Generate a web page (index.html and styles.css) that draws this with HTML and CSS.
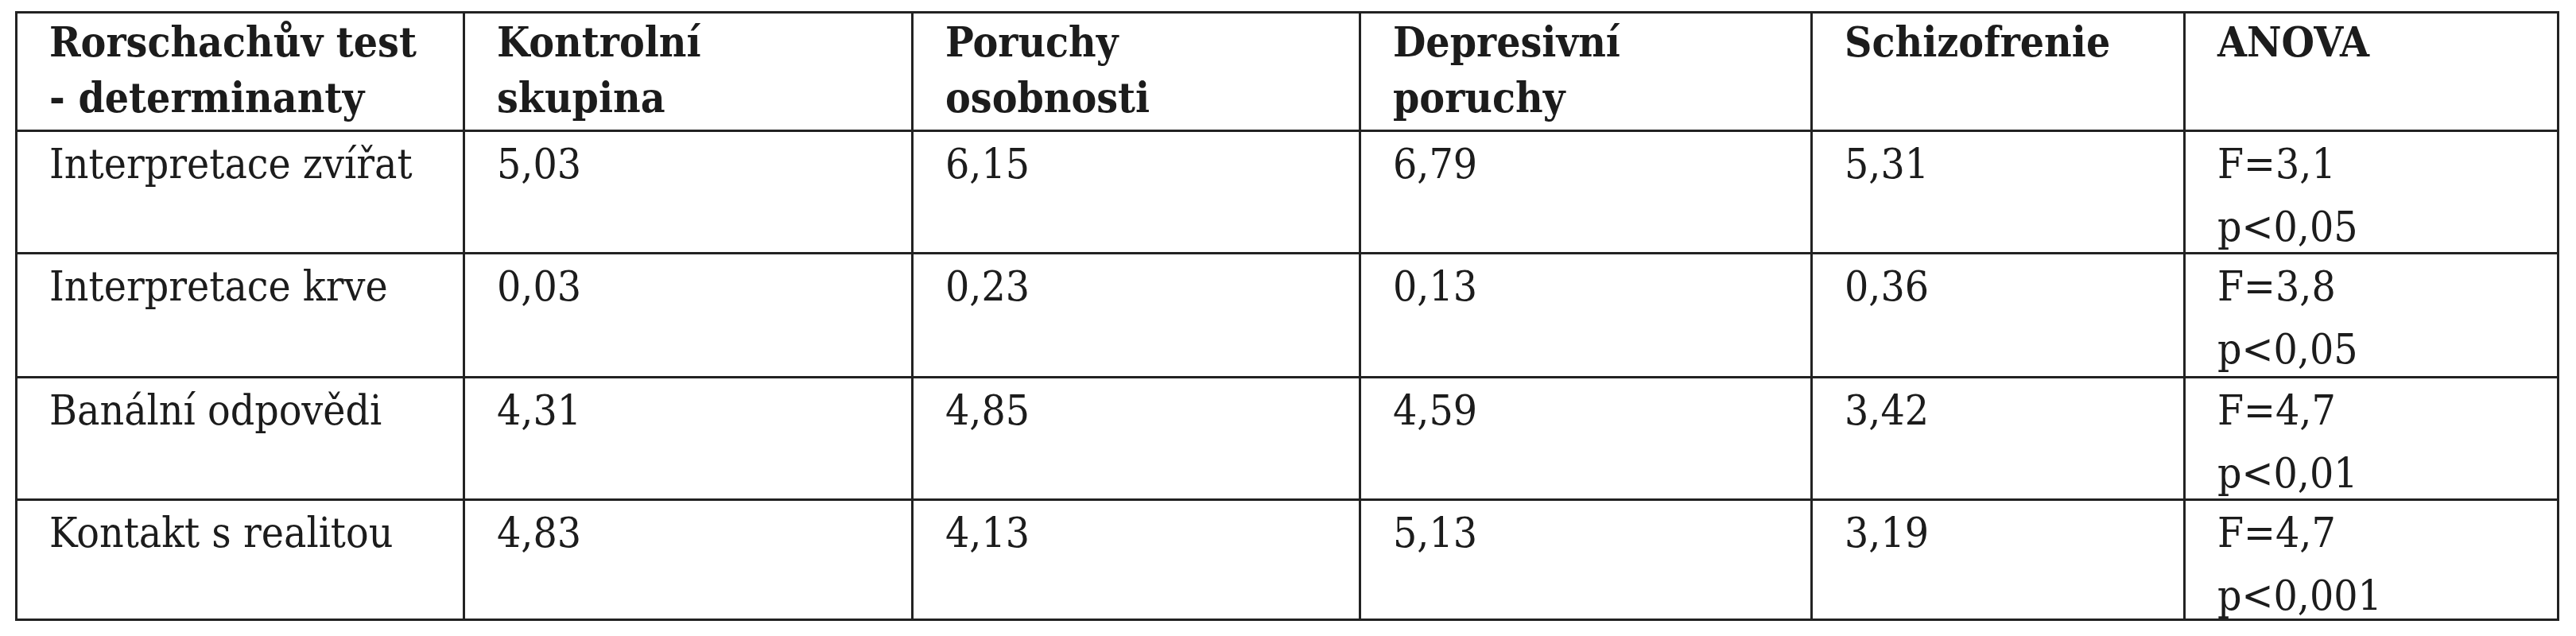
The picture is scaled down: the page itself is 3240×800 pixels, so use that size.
FILE: index.html
```html
<!DOCTYPE html>
<html lang="cs">
<head>
<meta charset="utf-8">
<title>Rorschachův test - determinanty</title>
<link rel="stylesheet" href="styles.css">
</head>
<body>
<table class="data">
  <colgroup>
    <col class="c1"><col class="c2"><col class="c3"><col class="c4"><col class="c5"><col class="c6">
  </colgroup>
  <thead>
    <tr class="head">
      <th><div class="tx">Rorschachův test<br>- determinanty</div></th>
      <th><div class="tx">Kontrolní<br>skupina</div></th>
      <th><div class="tx">Poruchy<br>osobnosti</div></th>
      <th><div class="tx">Depresivní<br>poruchy</div></th>
      <th><div class="tx">Schizofrenie</div></th>
      <th><div class="tx">ANOVA</div></th>
    </tr>
  </thead>
  <tbody>
    <tr class="r1">
      <td><div class="tx">Interpretace zvířat</div></td>
      <td><div class="tx">5,03</div></td>
      <td><div class="tx">6,15</div></td>
      <td><div class="tx">6,79</div></td>
      <td><div class="tx">5,31</div></td>
      <td><div class="tx"><p>F=3,1</p><p>p&lt;0,05</p></div></td>
    </tr>
    <tr class="r2">
      <td><div class="tx">Interpretace krve</div></td>
      <td><div class="tx">0,03</div></td>
      <td><div class="tx">0,23</div></td>
      <td><div class="tx">0,13</div></td>
      <td><div class="tx">0,36</div></td>
      <td><div class="tx"><p>F=3,8</p><p>p&lt;0,05</p></div></td>
    </tr>
    <tr class="r3">
      <td><div class="tx">Banální odpovědi</div></td>
      <td><div class="tx">4,31</div></td>
      <td><div class="tx">4,85</div></td>
      <td><div class="tx">4,59</div></td>
      <td><div class="tx">3,42</div></td>
      <td><div class="tx"><p>F=4,7</p><p>p&lt;0,01</p></div></td>
    </tr>
    <tr class="r4">
      <td><div class="tx">Kontakt s realitou</div></td>
      <td><div class="tx">4,83</div></td>
      <td><div class="tx">4,13</div></td>
      <td><div class="tx">5,13</div></td>
      <td><div class="tx">3,19</div></td>
      <td><div class="tx"><p>F=4,7</p><p>p&lt;0,001</p></div></td>
    </tr>
  </tbody>
</table>
</body>
</html>
```

FILE: styles.css
```css
html, body {
  margin: 0;
  background: #ffffff;
}

body {
  padding: 14px 0 0 19px;
  color: #1c1c1c;
  font-family: "DejaVu Serif Condensed", "DejaVu Serif", "Liberation Serif", serif;
  font-stretch: condensed;
  font-size: 53px;
}

.data {
  border-collapse: collapse;
  table-layout: fixed;
  width: 3200px;
  border: 3px solid #222222;
}

.c1 { width: 563px; }
.c2 { width: 564px; }
.c3 { width: 563px; }
.c4 { width: 568px; }
.c5 { width: 469px; }
.c6 { width: 470px; }

.data th,
.data td {
  border: 3px solid #222222;
  padding: 0 10px 0 40px;
  vertical-align: top;
  text-align: left;
  overflow: hidden;
}

.data th {
  font-weight: bold;
  line-height: 70px;
}

.data td {
  font-weight: normal;
  line-height: 79px;
}

.tx {
  margin: 0 0 -16px 0;
  white-space: nowrap;
}

.tx p {
  margin: 0;
}

.head { height: 149px; }
.r1 { height: 154px; }
.r2 { height: 156px; }
.r3 { height: 154px; }
.r4 { height: 151px; }
```
